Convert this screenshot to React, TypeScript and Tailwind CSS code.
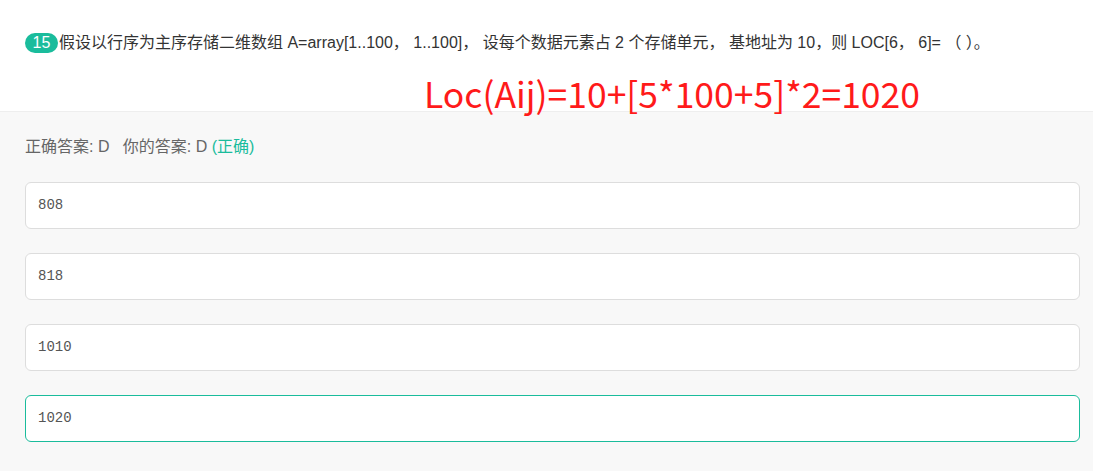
const options = ["808", "818", "1010", "1020"];

export default function App() {
  return (
    <div className="h-[471px] w-[1093px] overflow-hidden bg-[#f8f8f8] font-['Microsoft_YaHei','Liberation_Sans','Noto_Sans_CJK_SC',sans-serif]">
      <div className="h-[112px] border-b border-[#eeeeee] bg-white">
        <div className="flex items-center whitespace-nowrap pl-[25px] pt-[32px] text-[16px] leading-[21px] text-[#333]">
          <span className="mr-[1px] flex h-[20px] w-[33px] items-center justify-center rounded-full bg-[#1abc9c] text-[16px] text-white">
            15
          </span>
          假设以行序为主序存储二维数组 A=array[1..100， 1..100]， 设每个数据元素占 2 个存储单元， 基地址为 10，则 LOC[6， 6]= （ ）。
        </div>
        <div className="mt-[20px] pl-[424px] font-['Noto_Sans_CJK_SC',sans-serif] text-[35.5px] leading-[40px] text-[#ff1a1a]">
          Loc(Aij)=10+[5*100+5]*2=1020
        </div>
      </div>
      <div className="px-[25px] pr-[13px]">
        <div className="pt-[25px] text-[16px] leading-[20px] text-[#666]">
          正确答案: D&nbsp;&nbsp;&nbsp;你的答案: D <span className="text-[#1abc9c]">(正确)</span>
        </div>
        <div className="mt-[25px] flex flex-col gap-[24px]">
          {options.map((o, i) => (
            <div
              key={o}
              className={`flex h-[47px] items-center rounded-[6px] border bg-white px-[12px] font-['Liberation_Mono',monospace] text-[14px] text-[#555] ${
                i === 3 ? "border-[#1abc9c]" : "border-[#dddddd]"
              }`}
            >
              {o}
            </div>
          ))}
        </div>
      </div>
    </div>
  );
}
